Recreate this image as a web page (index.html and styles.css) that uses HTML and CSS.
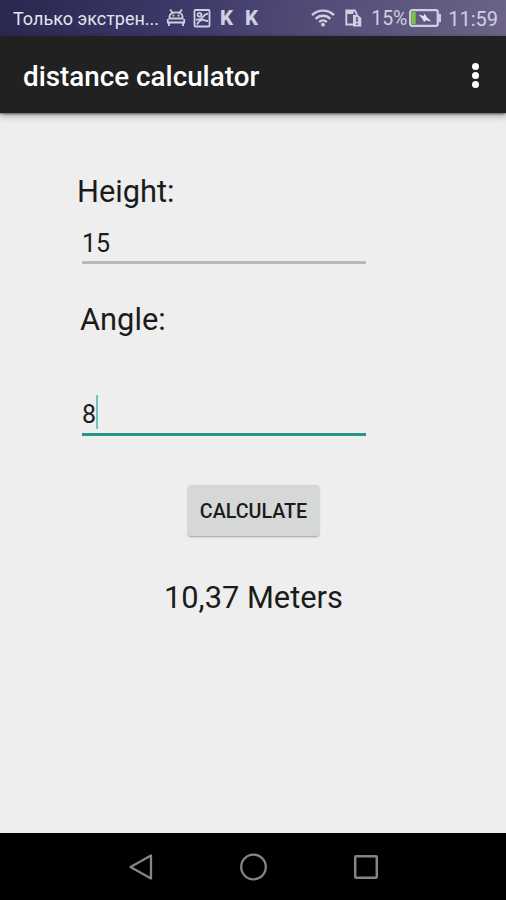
FILE: index.html
```
<!DOCTYPE html>
<html lang="en">
<head>
  <meta charset="UTF-8">
  <title>distance calculator</title>
  <meta name="viewport" content="width=device-width, initial-scale=1.0">
  <link rel="stylesheet" href="styles.css">
</head>
<body>
  <div class="status-bar">
    <span class="carrier">Только экстрен...</span>
    <svg class="android" width="20" height="20" viewBox="0 0 20 20" fill="none" stroke="#d0cfe2" stroke-width="1.8">
      <path d="M4 1.500l2.500 3M16 1.500l-2.500 3M3.500 10.500V8.500c0-5.500 13-5.500 13 0v2zM1.800 11v4.500M18.200 11v4.500M1 14.500h18M3 14.500v3.500M17 14.500v3.500"/>
      <path d="M7.500 6.500v2M12.500 6.500v2"/>
    </svg>
    <svg class="picture" width="18" height="20" viewBox="0 0 18 20" fill="none" stroke="#d0cfe2" stroke-width="1.8">
      <rect x="1.500" y="2" width="15" height="16.500" rx="1"/>
      <circle cx="6.500" cy="6.800" r="1.900"/>
      <path d="M3 12c3-1 4.500 0 6-2s3-4 6-4.300M4 16.500c2-3.500 4-5 6.500-4.500 1.500.3 2.500 1 4.500 1"/>
    </svg>
    <span class="letter">K</span>
    <span class="letter">K</span>
    <div class="status-right">
      <svg class="wifi" width="24" height="18" viewBox="0 0 24 18" fill="none" stroke="#d0cfe2" stroke-width="2.400">
        <path d="M1 6.200a15.500 15.500 0 0 1 22 0M4.600 9.800a10.500 10.500 0 0 1 14.800 0M8.200 13.100a5.400 5.400 0 0 1 7.600 0"/>
        <circle cx="12" cy="15.700" r="1.900" fill="#d0cfe2" stroke="none"/>
      </svg>
      <svg class="sim" width="17" height="18" viewBox="0 0 17 18">
        <path d="M1.300 15.500V1.500h8.500l1.800 3v11z" fill="none" stroke="#d0cfe2" stroke-width="1.800"/>
        <path d="M1.500 2h7v3h-7z" fill="#d0cfe2"/>
        <path d="M8 6h5l3.300 3v8.500H8z" fill="#d0cfe2"/>
        <path d="M12 8v5M12 14.300v1.700" stroke="#57517a" stroke-width="1.600"/>
      </svg>
      <span class="percent">15%</span>
      <svg class="battery" width="33" height="18" viewBox="0 0 33 18">
        <rect x="1.200" y="1.200" width="27.600" height="15.600" rx="2" fill="none" stroke="#d0cfe2" stroke-width="2.300"/>
        <path d="M30 5h2v8h-2z" fill="#d0cfe2"/>
        <path d="M2.800 3h3.900v12H2.800z" fill="#7cc83c"/>
        <path d="M9.500 5.500l5 1.500 1.200-2.300 2.300 3.800 4.500 4-6-1.200-1.200 2-2.300-4z" fill="#e4e2ee"/>
      </svg>
      <span class="clock">11:59</span>
    </div>
  </div>

  <header class="app-bar">
    <h1>distance calculator</h1>
    <button class="menu" aria-label="More options"><i></i><i></i><i></i></button>
  </header>

  <main>
    <div class="label height-label">Height:</div>
    <div class="field">15</div>
    <div class="label angle-label">Angle:</div>
    <div class="field focused">8<span class="caret"></span></div>
    <button class="calculate">CALCULATE</button>
    <div class="result">10,37 Meters</div>
  </main>

  <nav class="nav-bar">
    <svg width="28" height="28" viewBox="0 0 28 28" fill="none" stroke="#858585" stroke-width="2.300" stroke-linejoin="round">
      <path d="M4.500 14L25 2.500v23z"/>
    </svg>
    <svg width="28" height="28" viewBox="0 0 28 28" fill="none" stroke="#858585" stroke-width="2.300">
      <circle cx="14.500" cy="14" r="12.300"/>
    </svg>
    <svg width="28" height="28" viewBox="0 0 28 28" fill="none" stroke="#858585" stroke-width="2.500">
      <rect x="3.200" y="3.200" width="21.600" height="21.600" rx="1"/>
    </svg>
  </nav>
</body>
</html>
```

FILE: styles.css
```
* {
  box-sizing: border-box;
}

body {
  margin: 0;
  height: 900px;
  display: flex;
  flex-direction: column;
  background: #eeeeee;
  color: #1b1b1b;
  font-family: Roboto, sans-serif;
  overflow: hidden;
}

svg {
  display: block;
  flex: none;
}

.status-bar {
  height: 36px;
  flex: none;
  display: flex;
  align-items: center;
  padding: 0 8px 0 13px;
  background: linear-gradient(100deg, #29284f 0%, #3c3868 35%, #554e78 65%, #6b6488 100%);
  color: #d0cfe2;
  font-size: 19px;
  line-height: 36px;
  white-space: nowrap;
}

.carrier {
  width: 153px;
  color: #e4e3ee;
  font-size: 18px;
  padding-top: 2px;
}

.picture {
  margin: 0 9px 0 7px;
}

.letter {
  width: 25px;
  font-size: 20.5px;
  font-weight: 800;
}

.status-right {
  margin-left: auto;
  display: flex;
  align-items: center;
}

.sim {
  margin: 0 9px 0 10px;
}

.percent {
  width: 38px;
  padding-top: 2px;
  font-size: 19.5px;
}

.battery {
  margin-right: 6px;
}

.clock {
  padding-top: 2px;
  font-size: 20px;
}

.app-bar {
  height: 77px;
  flex: none;
  display: flex;
  align-items: center;
  justify-content: space-between;
  padding: 3px 23px 0;
  background: #212121;
  color: #fff;
  box-shadow: 0 1px 2px rgba(0, 0, 0, 0.5), 0 3px 7px rgba(0, 0, 0, 0.3);
}

h1 {
  margin: 0;
  padding-top: 1px;
  font-size: 27.8px;
  font-weight: 500;
  line-height: 40px;
}

.menu {
  display: flex;
  flex-direction: column;
  gap: 2px;
  padding: 0 4px 2px 0;
  border: 0;
  background: none;
}

.menu i {
  width: 7px;
  height: 7px;
  border-radius: 50%;
  background: #fff;
}

main {
  flex: 1;
  display: flex;
  flex-direction: column;
  align-items: flex-start;
  padding: 61px 0 0 82px;
}

.label,
.result {
  font-size: 30.8px;
  line-height: 36px;
}

.height-label {
  margin-left: -5px;
}

.field {
  width: 284px;
  height: 39px;
  margin-top: 15px;
  border-bottom: 3px solid #bababa;
  display: flex;
  align-items: flex-start;
  font-size: 25px;
  line-height: 38px;
}

.angle-label {
  margin: 38px 0 0 -2px;
}

.focused {
  height: 41px;
  margin-top: 57px;
  border-bottom-color: #2b9488;
  line-height: 39px;
}

.caret {
  width: 2px;
  height: 34px;
  background: #6fc4bc;
}

.calculate {
  width: 131px;
  height: 51px;
  margin: 49px 0 0 106px;
  padding: 0;
  border: 0;
  border-radius: 3px;
  background: #d6d8d7;
  box-shadow: 0 1px 2px rgba(0, 0, 0, 0.35);
  color: #1b1b1b;
  font: 500 19.7px/53px Roboto, sans-serif;
}

.result {
  margin: 44px 0 0 82px;
}

.nav-bar {
  height: 67px;
  flex: none;
  display: flex;
  justify-content: center;
  align-items: center;
  gap: 85px;
  background: #000;
}
```
